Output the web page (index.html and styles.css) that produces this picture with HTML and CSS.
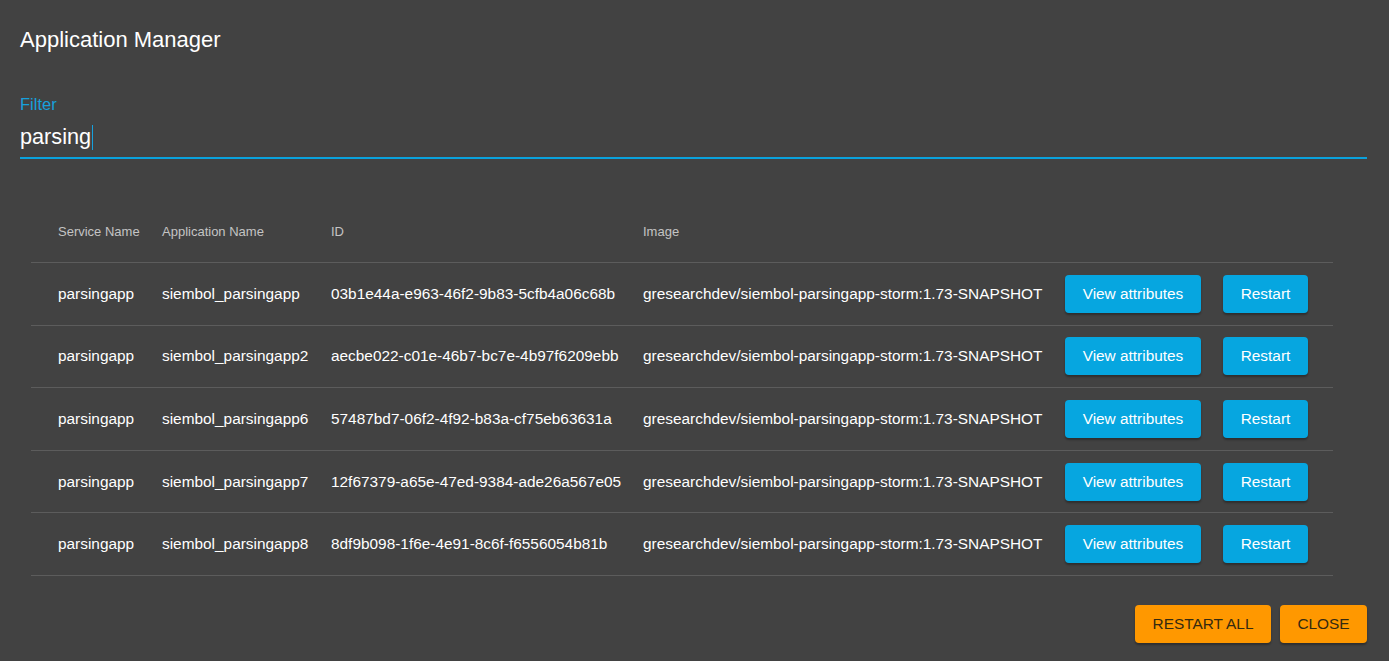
FILE: index.html
```html
<!DOCTYPE html>
<html>
<head>
<meta charset="utf-8">
<link rel="stylesheet" href="styles.css">
</head>
<body>
<div class="dialog">
  <h1 class="title">Application Manager</h1>
  <div class="field">
    <label class="field-label">Filter</label>
    <div class="field-input">parsing<span class="caret"></span></div>
  </div>
  <div class="table-wrap">
    <table class="apps">
      <colgroup>
        <col class="c1"><col class="c2"><col class="c3"><col class="c4"><col class="c5"><col class="c6">
      </colgroup>
      <thead>
        <tr><th>Service Name</th><th>Application Name</th><th>ID</th><th>Image</th><th></th><th></th></tr>
      </thead>
      <tbody>
        <tr><td>parsingapp</td><td>siembol_parsingapp</td><td>03b1e44a-e963-46f2-9b83-5cfb4a06c68b</td><td>gresearchdev/siembol-parsingapp-storm:1.73-SNAPSHOT</td><td><button class="btn btn-blue btn-view">View attributes</button></td><td><button class="btn btn-blue btn-restart">Restart</button></td></tr>
        <tr><td>parsingapp</td><td>siembol_parsingapp2</td><td>aecbe022-c01e-46b7-bc7e-4b97f6209ebb</td><td>gresearchdev/siembol-parsingapp-storm:1.73-SNAPSHOT</td><td><button class="btn btn-blue btn-view">View attributes</button></td><td><button class="btn btn-blue btn-restart">Restart</button></td></tr>
        <tr><td>parsingapp</td><td>siembol_parsingapp6</td><td>57487bd7-06f2-4f92-b83a-cf75eb63631a</td><td>gresearchdev/siembol-parsingapp-storm:1.73-SNAPSHOT</td><td><button class="btn btn-blue btn-view">View attributes</button></td><td><button class="btn btn-blue btn-restart">Restart</button></td></tr>
        <tr><td>parsingapp</td><td>siembol_parsingapp7</td><td>12f67379-a65e-47ed-9384-ade26a567e05</td><td>gresearchdev/siembol-parsingapp-storm:1.73-SNAPSHOT</td><td><button class="btn btn-blue btn-view">View attributes</button></td><td><button class="btn btn-blue btn-restart">Restart</button></td></tr>
        <tr><td>parsingapp</td><td>siembol_parsingapp8</td><td>8df9b098-1f6e-4e91-8c6f-f6556054b81b</td><td>gresearchdev/siembol-parsingapp-storm:1.73-SNAPSHOT</td><td><button class="btn btn-blue btn-view">View attributes</button></td><td><button class="btn btn-blue btn-restart">Restart</button></td></tr>
      </tbody>
    </table>
  </div>
  <div class="actions">
    <button class="btn btn-orange btn-restart-all">RESTART ALL</button>
    <button class="btn btn-orange btn-close">CLOSE</button>
  </div>
</div>
</body>
</html>
```
FILE: styles.css
```css
html, body {
  margin: 0;
  padding: 0;
  background: #424242;
  height: 100%;
}
body {
  font-family: "Liberation Sans", Arial, sans-serif;
  color: #ffffff;
}
.dialog {
  padding: 0 22px 0 20px;
  box-sizing: border-box;
  width: 1389px;
  height: 661px;
  overflow: hidden;
}
.title {
  margin: 0;
  padding-top: 27px;
  font-size: 22px;
  font-weight: 400;
  line-height: 26px;
  height: 26px;
}
.field {
  margin-top: 42px;
  border-bottom: 2px solid #0aa1dc;
  height: 64px;
  box-sizing: border-box;
}
.field-label {
  display: block;
  color: #17a0dc;
  font-size: 16.5px;
  line-height: 18px;
}
.field-input {
  margin-top: 11px;
  font-size: 21.7px;
  line-height: 26px;
  display: flex;
  align-items: center;
}
.caret {
  display: inline-block;
  width: 1px;
  height: 25px;
  background: #17a0dc;
  margin-left: 1px;
}
.table-wrap {
  margin-top: 43px;
  padding-left: 11px;
}
.apps {
  border-collapse: collapse;
  table-layout: fixed;
  width: 1302px;
}
.c1 { width: 131px; }
.c2 { width: 169px; }
.c3 { width: 312px; }
.c4 { width: 422px; }
.c5 { width: 158px; }
.c6 { width: 110px; }
.apps th {
  text-align: left;
  font-size: 13px;
  font-weight: 400;
  color: #c4c4c4;
  height: 58px;
  padding: 0 0 2px 0;
  border-bottom: 1px solid #5c5c5c;
  vertical-align: middle;
}
.apps td {
  font-size: 15.4px;
  height: 61.6px;
  padding: 0;
  border-bottom: 1px solid #5c5c5c;
  vertical-align: middle;
  white-space: nowrap;
}
.apps th:first-child, .apps td:first-child {
  padding-left: 27px;
}
.btn {
  font-family: "Liberation Sans", Arial, sans-serif;
  border: none;
  border-radius: 4px;
  height: 38px;
  font-size: 15.4px;
  padding: 0;
  cursor: pointer;
  box-shadow: 0 2px 2px rgba(0,0,0,0.3);
}
.btn-blue {
  background: #06a6e0;
  color: #ffffff;
}
.btn-view { width: 136px; }
.btn-restart { width: 85px; }
.actions {
  display: flex;
  justify-content: flex-end;
  gap: 9px;
  margin-top: 29px;
}
.btn-orange {
  background: #ff9800;
  color: #352a10;
}
.btn-restart-all { width: 136px; }
.btn-close { width: 87px; }
```
